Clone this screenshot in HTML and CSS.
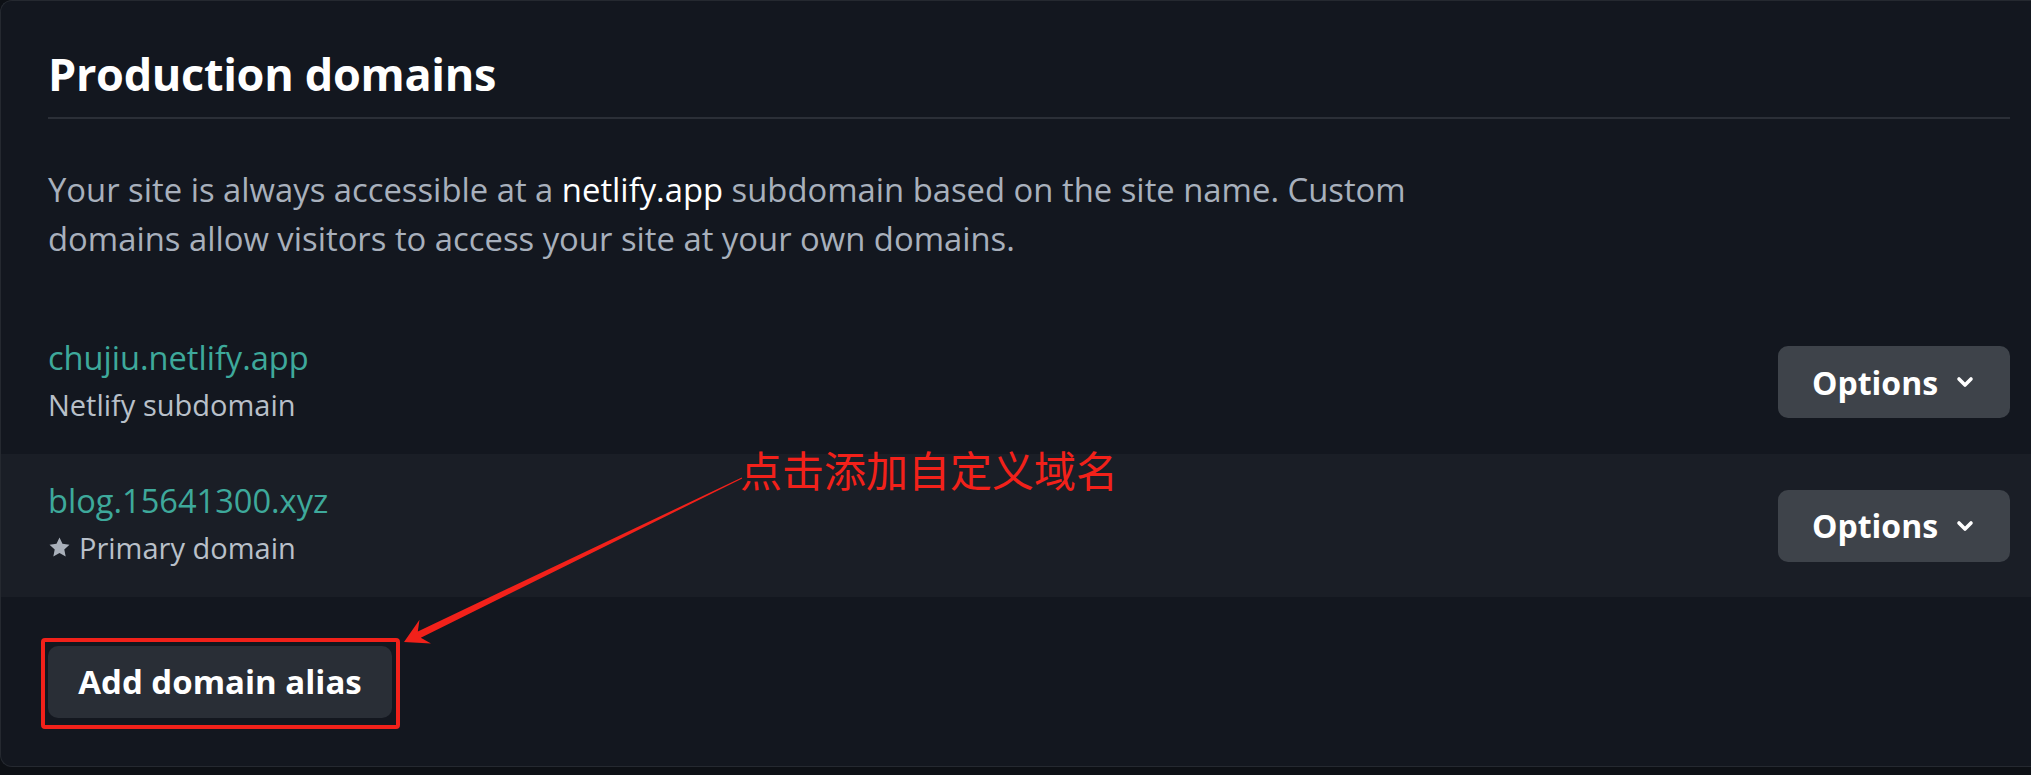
FILE: index.html
```html
<!DOCTYPE html>
<html lang="en">
<head>
<meta charset="utf-8">
<title>Production domains</title>
<link rel="stylesheet" href="styles.css">
</head>
<body>
<section class="card">
  <h2 class="card-title">Production domains</h2>
  <p class="intro">Your site is always accessible at a <span class="hl">netlify.app</span> subdomain based on the site name. Custom domains allow visitors to access your site at your own domains.</p>
  <ul class="domains">
    <li class="domain-row">
      <div class="domain-info">
        <a class="domain-name" href="#">chujiu.netlify.app</a>
        <div class="domain-meta">Netlify subdomain</div>
      </div>
      <button class="btn-options" type="button">Options
        <svg class="chev" width="18" height="12" viewBox="0 0 18 12"><path d="M3 3 L9 9 L15 3" fill="none" stroke="#fff" stroke-width="3.6" stroke-linecap="round" stroke-linejoin="round"/></svg>
      </button>
    </li>
    <li class="domain-row alt">
      <div class="domain-info">
        <a class="domain-name" href="#">blog.15641300.xyz</a>
        <div class="domain-meta">
          <svg class="star" width="23" height="23" viewBox="0 0 24 24"><path d="M12 1.5l3.1 6.7 7.3.85-5.4 5 1.45 7.25L12 17.65 5.55 21.3 7 14.05l-5.4-5 7.3-.85z" fill="#a9b0ba"/></svg>
          <span>Primary domain</span>
        </div>
      </div>
      <button class="btn-options" type="button">Options
        <svg class="chev" width="18" height="12" viewBox="0 0 18 12"><path d="M3 3 L9 9 L15 3" fill="none" stroke="#fff" stroke-width="3.6" stroke-linecap="round" stroke-linejoin="round"/></svg>
      </button>
    </li>
  </ul>
  <div class="alias-wrap">
    <button class="btn-alias" type="button">Add domain alias</button>
    <span class="highlight"></span>
  </div>
</section>
<div class="note">点击添加自定义域名</div>
<svg class="arrow" width="2031" height="775" viewBox="0 0 2031 775">
  <polygon points="404,642 419.5,619.8 417.8,631.4 741.8,477.5 742.2,478.5 420.8,637.7 431,643.6" fill="#f2211a"/>
</svg>
</body>
</html>
```

FILE: styles.css
```css
html, body {
  margin: 0;
  padding: 0;
}
body {
  width: 2031px;
  height: 775px;
  overflow: hidden;
  position: relative;
  background: #0d1015;
  font-family: "Open Sans", "Noto Sans", sans-serif;
  color: #a7afba;
}
.card {
  box-sizing: border-box;
  height: 767px;
  background: #13171f;
  border: 1px solid #252930;
  border-right: 0;
  border-radius: 12px 0 0 12px;
  padding: 42.5px 21px 0 47px;
}
.card-title {
  margin: 0;
  font-size: 45px;
  line-height: 60px;
  font-weight: 700;
  letter-spacing: -0.3px;
  color: #ffffff;
  padding-bottom: 13.8px;
  border-bottom: 2px solid #2b2f37;
}
.intro {
  margin: 47px 0 47px;
  max-width: 1410px;
  font-size: 32.8px;
  line-height: 48.6px;
  color: #a8b0bc;
}
.hl {
  color: #ffffff;
}
.domains {
  list-style: none;
  margin: 0 -21px 0 -47px;
  padding: 0;
}
.domain-row {
  box-sizing: border-box;
  height: 143.5px;
  padding: 0 21px 0 47px;
  display: flex;
  align-items: center;
  justify-content: space-between;
}
.domain-row.alt {
  background: #1a1e26;
}
.domain-info {
  display: flex;
  flex-direction: column;
}
.domain-name {
  font-size: 32.6px;
  line-height: 44px;
  color: #3ea99b;
  text-decoration: none;
}
.domain-meta {
  display: flex;
  align-items: center;
  gap: 8px;
  font-size: 29px;
  line-height: 49px;
  color: #b9c0c9;
}
.star {
  display: block;
}
.btn-options {
  box-sizing: border-box;
  width: 232px;
  height: 72px;
  display: flex;
  align-items: center;
  justify-content: center;
  gap: 18px;
  padding: 0 2px 0 0;
  border: 0;
  border-radius: 10px;
  background: #3e434a;
  color: #ffffff;
  font-family: "Open Sans", "Noto Sans", sans-serif;
  font-size: 32px;
  font-weight: 700;
}
.chev {
  display: block;
}
.alias-wrap {
  position: relative;
  display: inline-block;
  margin-top: 48.5px;
}
.btn-alias {
  display: block;
  box-sizing: border-box;
  width: 344px;
  height: 72px;
  padding: 0;
  border: 0;
  border-radius: 10px;
  background: #292e36;
  color: #ffffff;
  font-family: "Open Sans", "Noto Sans", sans-serif;
  font-size: 33px;
  font-weight: 700;
}
.highlight {
  position: absolute;
  left: -7px;
  top: -8px;
  right: -8px;
  bottom: -11px;
  border: 4.5px solid #f2211a;
  border-radius: 4px;
  pointer-events: none;
}
.note {
  position: absolute;
  left: 740px;
  top: 448px;
  font-family: "Noto Sans CJK SC", sans-serif;
  font-size: 42px;
  line-height: 42px;
  color: #f2211a;
  white-space: nowrap;
}
.arrow {
  position: absolute;
  left: 0;
  top: 0;
  pointer-events: none;
}
```
